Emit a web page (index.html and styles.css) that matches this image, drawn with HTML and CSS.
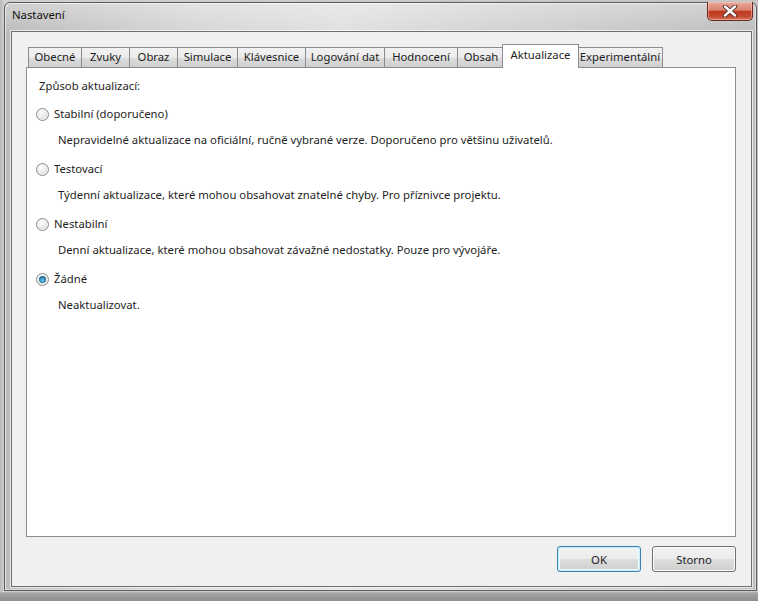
FILE: index.html
```html
<!DOCTYPE html>
<html lang="cs">
<head>
<meta charset="utf-8">
<title>Nastavení</title>
<link rel="stylesheet" href="styles.css">
</head>
<body>
<div class="desk">
  <div class="window">
    <div class="titlebar">
      <span class="title">Nastavení</span>
      <div class="close">
        <svg width="16" height="12" viewBox="0 0 16 12">
          <path d="M3 1.5 L13 10.5 M13 1.5 L3 10.5" stroke="#4a2a22" stroke-width="4.2" stroke-linecap="round"/>
          <path d="M3 1.5 L13 10.5 M13 1.5 L3 10.5" stroke="#ffffff" stroke-width="2.4" stroke-linecap="round"/>
        </svg>
      </div>
    </div>
    <div class="client">
      <div class="tabs">
        <div class="tab">Obecné</div>
        <div class="tab">Zvuky</div>
        <div class="tab">Obraz</div>
        <div class="tab">Simulace</div>
        <div class="tab">Klávesnice</div>
        <div class="tab">Logování dat</div>
        <div class="tab">Hodnocení</div>
        <div class="tab">Obsah</div>
        <div class="tab active">Aktualizace</div>
        <div class="tab">Experimentální</div>
      </div>
      <div class="panel">
        <div class="heading">Způsob aktualizací:</div>
        <div class="option first-option"><span class="radio"></span><span>Stabilní (doporučeno)</span></div>
        <div class="desc">Nepravidelné aktualizace na oficiální, ručně vybrané verze. Doporučeno pro většinu uživatelů.</div>
        <div class="option"><span class="radio"></span><span>Testovací</span></div>
        <div class="desc">Týdenní aktualizace, které mohou obsahovat znatelné chyby. Pro příznivce projektu.</div>
        <div class="option"><span class="radio"></span><span>Nestabilní</span></div>
        <div class="desc">Denní aktualizace, které mohou obsahovat závažné nedostatky. Pouze pro vývojáře.</div>
        <div class="option"><span class="radio checked"></span><span>Žádné</span></div>
        <div class="desc">Neaktualizovat.</div>
      </div>
      <div class="buttons">
        <button class="btn default">OK</button>
        <button class="btn">Storno</button>
      </div>
    </div>
  </div>
  <div class="behind"></div>
</div>
</body>
</html>
```
FILE: styles.css
```css
html, body {
  margin: 0;
  padding: 0;
}
body {
  width: 758px;
  height: 601px;
  overflow: hidden;
  font-family: "Noto Sans", "Open Sans", sans-serif;
  font-size: 11.3px;
  color: #1e1e1e;
  background: linear-gradient(to right, #b8b8b8 0, #d0d0d0 4px, #c4c4c4 100%);
}
.desk {
  width: 758px;
  height: 601px;
  padding-top: 2px;
  box-sizing: border-box;
}
.window {
  margin-left: 4px;
  width: 753px;
  height: 589px;
  box-sizing: border-box;
  border: 1px solid #5a5a5a;
  border-radius: 6px 6px 0 0;
  padding: 0 4px 3px 6px;
  background:
    linear-gradient(to bottom, rgba(255,255,255,0.3), rgba(255,255,255,0) 30px),
    linear-gradient(to right, #bcbcbc 0%, #d6d6d6 25%, #e0e0e0 45%, #d0d0d0 70%, #bdbdbd 100%);
  box-shadow: inset 1px 1px 0 rgba(255,255,255,0.6), inset -1px -1px 0 rgba(255,255,255,0.5);
  display: flex;
  flex-direction: column;
  position: relative;
  z-index: 1;
}
.titlebar {
  height: 28px;
  display: flex;
  align-items: flex-start;
  flex-shrink: 0;
}
.title {
  margin-top: 4px;
  padding-left: 1px;
  line-height: 16px;
  color: #111;
}
.close {
  margin-left: auto;
  margin-top: -1px;
  margin-right: -1px;
  width: 46px;
  height: 19px;
  box-sizing: border-box;
  border: 1px solid #6b2a1c;
  border-top: none;
  border-radius: 0 0 5px 5px;
  background: linear-gradient(to bottom, #e9a898 0%, #d9826d 45%, #c0391f 52%, #c44a32 80%, #d4735a 100%);
  box-shadow: inset 0 0 0 1px rgba(255,220,210,0.45);
  display: flex;
  align-items: center;
  justify-content: center;
}
.close svg {
  display: block;
}
.client {
  flex: 1;
  border: 1px solid #6e6e6e;
  background: #f0f0f0;
  padding: 12px 15px 0 14px;
  display: flex;
  flex-direction: column;
  box-shadow: 0 0 0 1px rgba(255,255,255,0.7);
}
.tabs {
  height: 23px;
  display: grid;
  grid-template-columns: 53px 48px 48px 60px 68px 79px 73px 47px 73px 85px;
  align-items: end;
  padding-left: 2px;
  position: relative;
  z-index: 2;
}
.tab {
  height: 20px;
  box-sizing: border-box;
  border: 1px solid #898c95;
  border-bottom: none;
  margin-right: -1px;
  line-height: 18px;
  text-align: center;
  white-space: nowrap;
  background: linear-gradient(to bottom, #f2f2f2 0%, #ebebeb 50%, #dddddd 51%, #cfcfcf 100%);
}
.tab.active {
  height: 24px;
  margin: 0 -2px -1px -2px;
  line-height: 20px;
  background: #ffffff;
  position: relative;
  z-index: 3;
}
.panel {
  height: 470px;
  box-sizing: border-box;
  border: 1px solid #898c95;
  background: #ffffff;
  padding: 10px 9px;
}
.heading {
  margin-left: 3px;
  line-height: 16px;
}
.option {
  display: flex;
  align-items: center;
  line-height: 16px;
  margin-top: 13px;
}
.option.first-option {
  margin-top: 12px;
}
.radio {
  width: 13px;
  height: 13px;
  box-sizing: border-box;
  border-radius: 50%;
  border: 1px solid #8a8a8a;
  background: radial-gradient(circle at 40% 35%, #ffffff 0%, #f0f0f0 35%, #cfcfcf 100%);
  margin-right: 5px;
  display: flex;
  align-items: center;
  justify-content: center;
  box-shadow: inset 0 0 0 1px #f4f4f4;
}
.radio.checked::after {
  content: "";
  width: 7px;
  height: 7px;
  border-radius: 50%;
  background: radial-gradient(circle at 50% 60%, #7fd4f2 0%, #2d86b4 45%, #163f63 100%);
}
.desc {
  margin-left: 22px;
  margin-top: 10px;
  line-height: 16px;
}
.buttons {
  display: flex;
  justify-content: flex-end;
  gap: 11px;
  margin-top: 9px;
}
.btn {
  width: 84px;
  height: 26px;
  box-sizing: border-box;
  border: 1px solid #707070;
  border-radius: 3px;
  font-family: "Noto Sans", "Open Sans", sans-serif;
  font-size: 11.3px;
  font-weight: 400;
  color: #1e1e1e;
  padding: 0;
  background: linear-gradient(to bottom, #f2f2f2 0%, #ebebeb 50%, #dddddd 51%, #cfcfcf 100%);
  box-shadow: inset 0 0 0 1px #fcfcfc;
}
.btn.default {
  border-color: #3c7fb1;
  box-shadow: inset 0 0 0 1px #c8eefc, inset 0 0 0 2px #e6f7fe;
}
.behind {
  height: 10px;
  background: linear-gradient(to bottom, #d8d8d8 0, #a6a6a6 2px, #8e8e8e 100%);
}
```
